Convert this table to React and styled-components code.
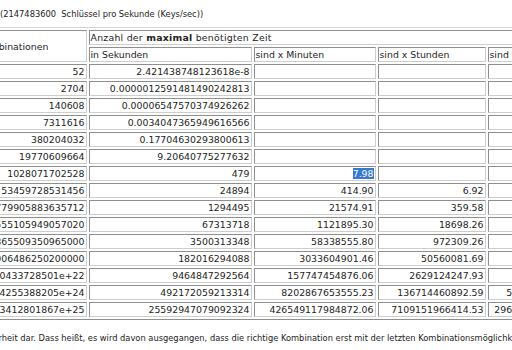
import React from 'react';
import styled, { createGlobalStyle } from 'styled-components';

const GlobalStyle = createGlobalStyle`
  html, body {
    margin: 0;
    padding: 0;
    background: #ffffff;
  }
`;

const Viewport = styled.div`
  width: 512px;
  height: 350px;
  overflow: hidden;
  background: #ffffff;
  color: #222222;
  font-family: "DejaVu Sans", Verdana, sans-serif;
  font-size: 9.35px;
`;

const Intro = styled.p`
  margin: 0;
  padding-top: 8px;
  font-size: 8.3px;
  line-height: 13px;
  white-space: nowrap;
`;

// the page is scrolled sideways, so the first column sits partly off screen
const Scrolled = styled.div`
  width: 720px;
  margin: 6px 0 0 -50px;
`;

const Table = styled.table`
  border-collapse: separate;
  border-spacing: 2px;
  border: 1px solid;
  border-color: #d6d6d6 #8e8e8e #8e8e8e #d6d6d6;
  font-size: inherit;
  color: inherit;
`;

const Cell = styled.td`
  height: 13px;
  padding: 0 1px;
  line-height: 13px;
  white-space: nowrap;
  vertical-align: middle;
  border: 1px solid;
  border-color: #8e8e8e #cdcdcd #cdcdcd #8e8e8e;
  text-align: ${p => (p.$num ? 'right' : 'left')};
  letter-spacing: ${p => (p.$wide ? '0.25px' : 'normal')};
  ${p => p.$w && `width: ${p.$w}px;`}
`;

const Selected = styled.span`
  background: #3678d4;
  color: #ffffff;
`;

const Note = styled.p`
  margin: 12px 0 0;
  font-size: 8.3px;
  line-height: 13px;
  white-space: nowrap;
  text-indent: -24px;
`;

const rows = [
  ['52', '2.421438748123618e-8', '', '', ''],
  ['2704', '0.0000012591481490242813', '', '', ''],
  ['140608', '0.00006547570374926262', '', '', ''],
  ['7311616', '0.0034047365949616566', '', '', ''],
  ['380204032', '0.17704630293800613', '', '', ''],
  ['19770609664', '9.20640775277632', '', '', ''],
  ['1028071702528', '479', '7.98', '', ''],
  ['53459728531456', '24894', '414.90', '6.92', ''],
  ['2779905883635712', '1294495', '21574.91', '359.58', '14.98'],
  ['144555105949057020', '67313718', '1121895.30', '18698.26', '779.09'],
  ['7516865509350965000', '3500313348', '58338555.80', '972309.26', '40512.89'],
  ['390877006486250200000', '182016294088', '3033604901.46', '50560081.69', '2106670.07'],
  ['2.032560433728501e+22', '9464847292564', '157747454876.06', '2629124247.93', '109546843.66'],
  ['1.0569314255388205e+24', '492172059213314', '8202867653555.23', '136714460892.59', '5696435870.52'],
  ['5.496043412801867e+25', '25592947079092324', '426549117984872.06', '7109151966414.53', '296214665267.27'],
];

function App() {
  return (
    <Viewport>
      <GlobalStyle />
      <Intro>(2147483600&nbsp; Schlüssel pro Sekunde (Keys/sec))</Intro>
      <Scrolled>
        <Table>
          <tbody>
            <tr>
              <Cell rowSpan={2} $w={125}>Anz. Kombinationen</Cell>
              <Cell colSpan={4} $wide>
                Anzahl der <b>maximal</b> benötigten Zeit
              </Cell>
            </tr>
            <tr>
              <Cell $w={159}>in Sekunden</Cell>
              <Cell $w={118}>sind x Minuten</Cell>
              <Cell $w={104}>sind x Stunden</Cell>
              <Cell $w={91}>sind x Tage</Cell>
            </tr>
            {rows.map(([combos, secs, mins, hours, days]) => (
              <tr key={combos}>
                <Cell $num>{combos}</Cell>
                <Cell $num>{secs}</Cell>
                <Cell $num>{mins === '7.98' ? <Selected>{mins}</Selected> : mins}</Cell>
                <Cell $num>{hours}</Cell>
                <Cell $num>{days}</Cell>
              </tr>
            ))}
          </tbody>
        </Table>
      </Scrolled>
      <Note>
        Sicherheit dar. Dass heißt, es wird davon ausgegangen, dass die richtige Kombination erst mit der
        letzten Kombinationsmöglichkeit gefunden wird.
      </Note>
    </Viewport>
  );
}

export default App;
